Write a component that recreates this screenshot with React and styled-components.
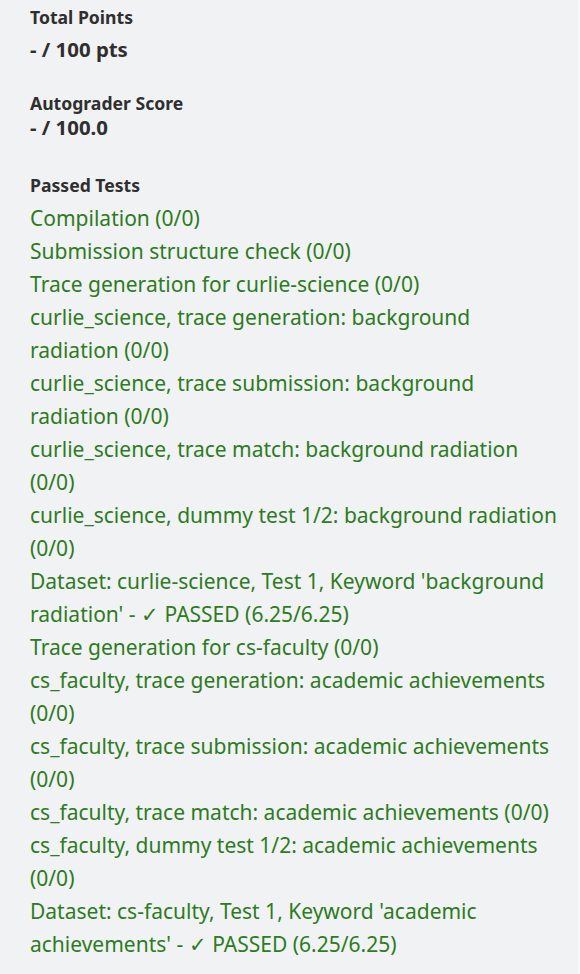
import React from "react";
import styled, { createGlobalStyle } from "styled-components";

const Global = createGlobalStyle`
  html, body { margin: 0; padding: 0; background: #f1f2f4; }
  body { font-family: "Noto Sans", "Open Sans", sans-serif; -webkit-font-smoothing: antialiased; }
`;

const Page = styled.div`
  box-sizing: border-box;
  width: 580px;
  min-height: 974px;
  padding: 5px 18px 0 30px;
  background: #f1f2f4;
  border-right: 2px solid #f7f8f9;
`;

const Section = styled.section`
  margin-bottom: ${(p) => p.$gap || 0}px;
`;

const Label = styled.div`
  font-size: 17.6px;
  font-weight: 700;
  line-height: 24px;
  color: #2f2f2f;
`;

const Value = styled.div`
  font-size: 20.4px;
  font-weight: 700;
  line-height: ${(p) => p.$lh || 30}px;
  margin-top: ${(p) => p.$mt || 0}px;
  color: #2f2f2f;
`;

const TestList = styled.ul`
  list-style: none;
  margin: 5px 0 0;
  padding: 0;
`;

const TestItem = styled.li`
  font-size: 21px;
  line-height: 33px;
  color: #2d7b22;
`;

const tests = [
  "Compilation (0/0)",
  "Submission structure check (0/0)",
  "Trace generation for curlie-science (0/0)",
  "curlie_science, trace generation: background radiation (0/0)",
  "curlie_science, trace submission: background radiation (0/0)",
  "curlie_science, trace match: background radiation (0/0)",
  "curlie_science, dummy test 1/2: background radiation (0/0)",
  "Dataset: curlie-science, Test 1, Keyword 'background radiation' - \u2713 PASSED (6.25/6.25)",
  "Trace generation for cs-faculty (0/0)",
  "cs_faculty, trace generation: academic achievements (0/0)",
  "cs_faculty, trace submission: academic achievements (0/0)",
  "cs_faculty, trace match: academic achievements (0/0)",
  "cs_faculty, dummy test 1/2: academic achievements (0/0)",
  "Dataset: cs-faculty, Test 1, Keyword 'academic achievements' - \u2713 PASSED (6.25/6.25)",
];

export default function App() {
  return (
    <>
      <Global />
      <Page>
        <Section $gap={27}>
          <Label>Total Points</Label>
          <Value $mt={5}>- / 100 pts</Value>
        </Section>
        <Section $gap={34}>
          <Label>Autograder Score</Label>
          <Value $lh={24}>- / 100.0</Value>
        </Section>
        <Section>
          <Label>Passed Tests</Label>
          <TestList>
            {tests.map((t) => (
              <TestItem key={t}>{t}</TestItem>
            ))}
          </TestList>
        </Section>
      </Page>
    </>
  );
}
